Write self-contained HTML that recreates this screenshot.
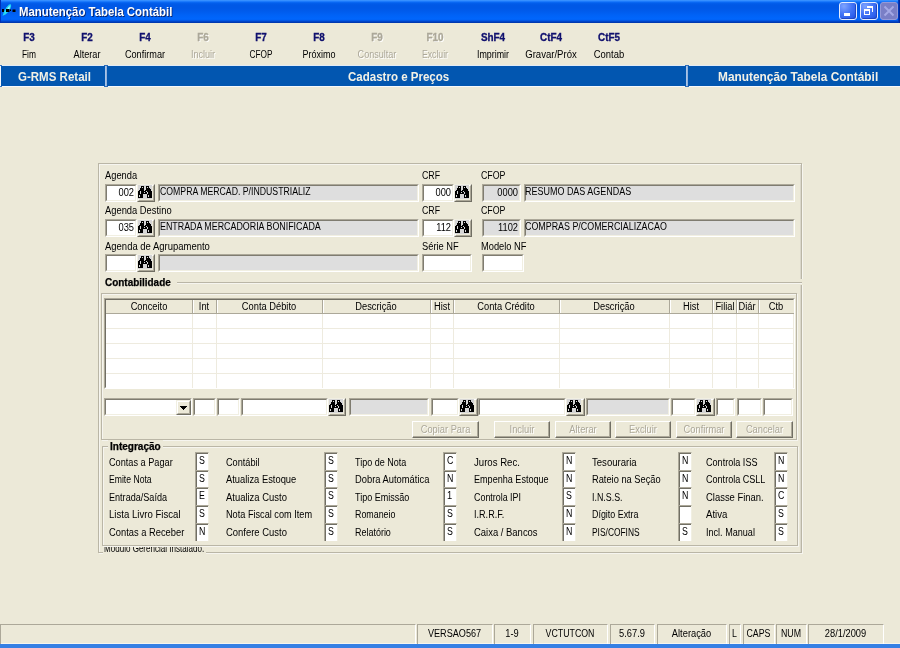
<!DOCTYPE html><html><head><meta charset="utf-8"><style>
html,body{margin:0;padding:0}
body{width:900px;height:648px;overflow:hidden;position:relative;background:#ECE9D8;font-family:"Liberation Sans",sans-serif}
#root{position:absolute;left:0;top:0;width:900px;height:648px;will-change:transform}
.t{position:absolute;white-space:nowrap;line-height:1;font-family:"Liberation Sans",sans-serif}
.sk{position:absolute;border-style:solid;border-width:1px;border-color:#ACA899 #FFFFFF #FFFFFF #ACA899}
.sk>div{border-style:solid;border-width:1px;border-color:#7F7C70 #F1EFE2 #F1EFE2 #7F7C70}
.rs{position:absolute;border-style:solid;border-width:1px;border-color:#F1EFE2 #716F64 #716F64 #F1EFE2;background:#ECE9D8}
.rs>div{border-style:solid;border-width:1px;border-color:#FFFFFF #ACA899 #ACA899 #FFFFFF}
.et{position:absolute;border:1px solid #BAB6A6;box-shadow:inset 1px 1px 0 #F6F5EF,1px 1px 0 #F6F5EF}
.hl{position:absolute;height:1px;background:#BAB6A6;box-shadow:0 1px 0 #F6F5EF}
</style></head><body><div id="root">

<div style="position:absolute;left:0;top:0;width:900px;height:23px;background:linear-gradient(to bottom,#4198FF 0px,#2A86FF 1px,#0E6EF8 2px,#035FEC 3px,#0058E6 5px,#0058E6 8px,#005BEC 11px,#0062F6 15px,#0066FC 19px,#0060F4 20px,#004CD6 21px,#003CB8 22px,#0034A8 23px)"></div>
<div style="position:absolute;left:0;top:0;width:1px;height:23px;background:#0030B8"></div>
<div style="position:absolute;left:898px;top:0;width:2px;height:23px;background:linear-gradient(to right,#0040C8,#001E90)"></div>
<svg style="position:absolute;left:0;top:0" width="18" height="20" viewBox="0 0 18 20"><path d="M2.6 15.8 L4 11.5 L6.5 7.2 L9 4.6 L10.8 4.3 L11.2 6 L10.2 9 L8.2 12 L5.5 14.6 Z" fill="#1FD8F2"/><path d="M5 13 L7.5 8.5 L9.8 5.4 L9.6 8.4 Z" fill="#A6F8FF"/><rect x="2" y="9" width="2" height="3" fill="#000"/><rect x="6" y="9" width="3.5" height="3" fill="#000"/><rect x="10" y="9.5" width="1" height="1.5" fill="#000"/><rect x="12.5" y="9.5" width="3" height="2.5" fill="#000"/></svg>
<div class="t" style="left:19.00px;top:5.00px;transform-origin:0 0;font-size:13px;font-weight:bold;color:#FFFFFF;transform:scaleX(0.9900);transform:scaleX(0.875);transform-origin:0 0;text-shadow:1px 1px 0 #0A246A;">Manutenção Tabela Contábil</div>
<div style="position:absolute;left:839px;top:2px;width:16px;height:16px;border:1px solid #E4ECFF;border-radius:3px;background:radial-gradient(circle at 25% 20%,#7FA4FF 0%,#4475F6 45%,#2A5CEA 80%,#1C4AD4 100%);box-shadow:inset -1px -1px 0 #2046C4"><div style="position:absolute;left:4px;top:10px;width:6px;height:3px;background:#fff"></div></div>
<div style="position:absolute;left:860px;top:2px;width:16px;height:16px;border:1px solid #E4ECFF;border-radius:3px;background:radial-gradient(circle at 25% 20%,#7FA4FF 0%,#4475F6 45%,#2A5CEA 80%,#1C4AD4 100%);box-shadow:inset -1px -1px 0 #2046C4"><div style="position:absolute;left:6px;top:3px;width:6px;height:2px;background:#fff"></div><div style="position:absolute;left:11px;top:3px;width:1px;height:6px;background:#fff"></div><div style="position:absolute;left:3px;top:6px;width:4px;height:3px;border:1px solid #fff;border-top-width:2px"></div></div>
<div style="position:absolute;left:880px;top:2px;width:16px;height:16px;border:1px solid #959AD8;border-radius:3px;background:#7A7FC6"><svg width="16" height="16" style="position:absolute;left:0;top:0"><path d="M3.5 3.5 L12.5 12.5 M12.5 3.5 L3.5 12.5" stroke="#A4A9E6" stroke-width="1.9"/></svg></div>
<div class="t" style="left:-0.22px;width:58px;text-align:center;top:33.44px;transform-origin:50% 0;font-size:10px;font-weight:bold;color:#10106E;transform:scaleX(0.9900);-webkit-text-stroke:0.3px #10106E;">F3</div>
<div class="t" style="left:-5.86px;width:70px;text-align:center;top:50.14px;transform-origin:50% 0;font-size:10px;font-weight:normal;color:#000;transform:scaleX(0.8389);">Fim</div>
<div class="t" style="left:57.78px;width:58px;text-align:center;top:33.44px;transform-origin:50% 0;font-size:10px;font-weight:bold;color:#10106E;transform:scaleX(0.9900);-webkit-text-stroke:0.3px #10106E;">F2</div>
<div class="t" style="left:51.69px;width:70px;text-align:center;top:50.14px;transform-origin:50% 0;font-size:10px;font-weight:normal;color:#000;transform:scaleX(0.9129);">Alterar</div>
<div class="t" style="left:115.78px;width:58px;text-align:center;top:33.44px;transform-origin:50% 0;font-size:10px;font-weight:bold;color:#10106E;transform:scaleX(0.9900);-webkit-text-stroke:0.3px #10106E;">F4</div>
<div class="t" style="left:109.69px;width:70px;text-align:center;top:50.14px;transform-origin:50% 0;font-size:10px;font-weight:normal;color:#000;transform:scaleX(0.9155);">Confirmar</div>
<div class="t" style="left:173.78px;width:58px;text-align:center;top:33.44px;transform-origin:50% 0;font-size:10px;font-weight:bold;color:#ACA899;transform:scaleX(0.9900);-webkit-text-stroke:0.3px #ACA899;text-shadow:1px 1px 0 #fff;">F6</div>
<div class="t" style="left:167.70px;width:70px;text-align:center;top:50.14px;transform-origin:50% 0;font-size:10px;font-weight:normal;color:#ACA899;transform:scaleX(0.9069);text-shadow:1px 1px 0 #fff;">Incluir</div>
<div class="t" style="left:231.78px;width:58px;text-align:center;top:33.44px;transform-origin:50% 0;font-size:10px;font-weight:bold;color:#10106E;transform:scaleX(0.9900);-webkit-text-stroke:0.3px #10106E;">F7</div>
<div class="t" style="left:225.86px;width:70px;text-align:center;top:50.14px;transform-origin:50% 0;font-size:10px;font-weight:normal;color:#000;transform:scaleX(0.8254);">CFOP</div>
<div class="t" style="left:289.78px;width:58px;text-align:center;top:33.44px;transform-origin:50% 0;font-size:10px;font-weight:bold;color:#10106E;transform:scaleX(0.9900);-webkit-text-stroke:0.3px #10106E;">F8</div>
<div class="t" style="left:283.80px;width:70px;text-align:center;top:50.14px;transform-origin:50% 0;font-size:10px;font-weight:normal;color:#000;transform:scaleX(0.8999);">Próximo</div>
<div class="t" style="left:347.78px;width:58px;text-align:center;top:33.44px;transform-origin:50% 0;font-size:10px;font-weight:bold;color:#ACA899;transform:scaleX(0.9900);-webkit-text-stroke:0.3px #ACA899;text-shadow:1px 1px 0 #fff;">F9</div>
<div class="t" style="left:341.70px;width:70px;text-align:center;top:50.14px;transform-origin:50% 0;font-size:10px;font-weight:normal;color:#ACA899;transform:scaleX(0.9064);text-shadow:1px 1px 0 #fff;">Consultar</div>
<div class="t" style="left:405.78px;width:58px;text-align:center;top:33.44px;transform-origin:50% 0;font-size:10px;font-weight:bold;color:#ACA899;transform:scaleX(0.9900);-webkit-text-stroke:0.3px #ACA899;text-shadow:1px 1px 0 #fff;">F10</div>
<div class="t" style="left:399.71px;width:70px;text-align:center;top:50.14px;transform-origin:50% 0;font-size:10px;font-weight:normal;color:#ACA899;transform:scaleX(0.8672);text-shadow:1px 1px 0 #fff;">Excluir</div>
<div class="t" style="left:463.78px;width:58px;text-align:center;top:33.44px;transform-origin:50% 0;font-size:10px;font-weight:bold;color:#10106E;transform:scaleX(0.9900);-webkit-text-stroke:0.3px #10106E;">ShF4</div>
<div class="t" style="left:457.70px;width:70px;text-align:center;top:50.14px;transform-origin:50% 0;font-size:10px;font-weight:normal;color:#000;transform:scaleX(0.8865);">Imprimir</div>
<div class="t" style="left:521.78px;width:58px;text-align:center;top:33.44px;transform-origin:50% 0;font-size:10px;font-weight:bold;color:#10106E;transform:scaleX(0.9900);-webkit-text-stroke:0.3px #10106E;">CtF4</div>
<div class="t" style="left:516.00px;width:70px;text-align:center;top:50.14px;transform-origin:50% 0;font-size:10px;font-weight:normal;color:#000;transform:scaleX(0.9573);">Gravar/Próx</div>
<div class="t" style="left:579.78px;width:58px;text-align:center;top:33.44px;transform-origin:50% 0;font-size:10px;font-weight:bold;color:#10106E;transform:scaleX(0.9900);-webkit-text-stroke:0.3px #10106E;">CtF5</div>
<div class="t" style="left:573.79px;width:70px;text-align:center;top:50.14px;transform-origin:50% 0;font-size:10px;font-weight:normal;color:#000;transform:scaleX(0.9423);">Contab</div>
<div style="position:absolute;left:0;top:65px;width:900px;height:22px;background:#0256B0;border-top:1px solid #E2EBF5;border-bottom:1px solid #F6F8FB;box-sizing:border-box"></div>
<div style="position:absolute;left:0;top:66px;width:1px;height:20px;background:#F4F7FB"></div>
<div style="position:absolute;left:0;top:65px;width:2px;height:1px;background:#3D78C0"></div><div style="position:absolute;left:0;top:86px;width:2px;height:1px;background:#3D78C0"></div>
<div style="position:absolute;left:105px;top:66px;width:2px;height:20px;background:linear-gradient(to right,#B4CCEA,#86AADA)"></div>
<div style="position:absolute;left:104px;top:65px;width:4px;height:1px;background:#2F6DBA"></div>
<div style="position:absolute;left:104px;top:86px;width:4px;height:1px;background:#2F6DBA"></div>
<div style="position:absolute;left:686px;top:66px;width:2px;height:20px;background:linear-gradient(to right,#B4CCEA,#86AADA)"></div>
<div style="position:absolute;left:685px;top:65px;width:4px;height:1px;background:#2F6DBA"></div>
<div style="position:absolute;left:685px;top:86px;width:4px;height:1px;background:#2F6DBA"></div>
<div class="t" style="left:18.30px;top:70.54px;transform-origin:0 0;font-size:12px;font-weight:bold;color:#F3F1E6;transform:scaleX(0.9900);transform:scaleX(0.96);transform-origin:0 0;">G-RMS Retail</div>
<div class="t" style="left:348.30px;top:70.54px;transform-origin:0 0;font-size:12px;font-weight:bold;color:#F3F1E6;transform:scaleX(0.9900);transform:scaleX(0.96);transform-origin:0 0;">Cadastro e Preços</div>
<div class="t" style="left:718.30px;top:70.54px;transform-origin:0 0;font-size:12px;font-weight:bold;color:#F3F1E6;transform:scaleX(0.9900);transform:scaleX(0.99);transform-origin:0 0;">Manutenção Tabela Contábil</div>
<div class="et" style="left:98px;top:163px;width:702px;height:388px"></div>
<div style="position:absolute;left:800px;top:165px;width:1px;height:387px;background:#DAD7CA"></div>
<div class="t" style="left:105.00px;top:170.53px;transform-origin:0 0;font-size:10px;font-weight:normal;color:#000;transform:scaleX(0.9300);">Agenda</div>
<div class="t" style="left:421.70px;top:170.53px;transform-origin:0 0;font-size:10px;font-weight:normal;color:#000;transform:scaleX(0.8800);">CRF</div>
<div class="t" style="left:481.10px;top:170.53px;transform-origin:0 0;font-size:10px;font-weight:normal;color:#000;transform:scaleX(0.8800);">CFOP</div>
<div class="t" style="left:105.00px;top:205.53px;transform-origin:0 0;font-size:10px;font-weight:normal;color:#000;transform:scaleX(0.9357);">Agenda Destino</div>
<div class="t" style="left:421.70px;top:205.53px;transform-origin:0 0;font-size:10px;font-weight:normal;color:#000;transform:scaleX(0.8800);">CRF</div>
<div class="t" style="left:481.10px;top:205.53px;transform-origin:0 0;font-size:10px;font-weight:normal;color:#000;transform:scaleX(0.8800);">CFOP</div>
<div class="t" style="left:105.00px;top:241.53px;transform-origin:0 0;font-size:10px;font-weight:normal;color:#000;transform:scaleX(0.9477);">Agenda de Agrupamento</div>
<div class="t" style="left:421.70px;top:241.53px;transform-origin:0 0;font-size:10px;font-weight:normal;color:#000;transform:scaleX(0.9300);">Série NF</div>
<div class="t" style="left:481.10px;top:241.53px;transform-origin:0 0;font-size:10px;font-weight:normal;color:#000;transform:scaleX(0.9300);">Modelo NF</div>
<div class="sk" style="left:105px;top:184px;width:30px;height:16px"><div style="width:28px;height:14px;background:#fff"></div></div>
<div class="rs" style="left:137px;top:184px;width:16px;height:16px"><div style="width:14px;height:14px;position:relative"><svg width="14" height="14" viewBox="0 0 14 14" shape-rendering="crispEdges" style="position:absolute;left:-1px;top:-1px"><rect width="14" height="14" fill="#D6D6D6"/><path fill="#000" d="M3 1h3v1h-3zM8 1h3v1h-3zM3 2h1v1h-1zM5 2h1v1h-1zM8 2h1v1h-1zM10 2h1v1h-1zM2 3h4v1h-4zM8 3h4v1h-4zM2 4h4v1h-4zM8 4h5v1h-5zM1 5h5v1h-5zM7 5h6v1h-6zM0 6h2v1h-2zM3 6h5v1h-5zM9 6h5v1h-5zM0 7h2v1h-2zM3 7h3v1h-3zM7 7h2v1h-2zM10 7h4v1h-4zM0 8h2v1h-2zM3 8h6v1h-6zM10 8h4v1h-4zM0 9h5v1h-5zM9 9h5v1h-5zM0 10h1v1h-1zM2 10h3v1h-3zM9 10h1v1h-1zM11 10h3v1h-3zM0 11h1v1h-1zM2 11h3v1h-3zM9 11h1v1h-1zM11 11h3v1h-3zM0 12h5v1h-5zM9 12h5v1h-5z"/></svg></div></div>
<div class="sk" style="left:158px;top:184px;width:259px;height:16px"><div style="width:257px;height:14px;background:#DEDEDE"></div></div>
<div class="sk" style="left:422px;top:184px;width:30px;height:16px"><div style="width:28px;height:14px;background:#fff"></div></div>
<div class="rs" style="left:454px;top:184px;width:16px;height:16px"><div style="width:14px;height:14px;position:relative"><svg width="14" height="14" viewBox="0 0 14 14" shape-rendering="crispEdges" style="position:absolute;left:-1px;top:-1px"><rect width="14" height="14" fill="#D6D6D6"/><path fill="#000" d="M3 1h3v1h-3zM8 1h3v1h-3zM3 2h1v1h-1zM5 2h1v1h-1zM8 2h1v1h-1zM10 2h1v1h-1zM2 3h4v1h-4zM8 3h4v1h-4zM2 4h4v1h-4zM8 4h5v1h-5zM1 5h5v1h-5zM7 5h6v1h-6zM0 6h2v1h-2zM3 6h5v1h-5zM9 6h5v1h-5zM0 7h2v1h-2zM3 7h3v1h-3zM7 7h2v1h-2zM10 7h4v1h-4zM0 8h2v1h-2zM3 8h6v1h-6zM10 8h4v1h-4zM0 9h5v1h-5zM9 9h5v1h-5zM0 10h1v1h-1zM2 10h3v1h-3zM9 10h1v1h-1zM11 10h3v1h-3zM0 11h1v1h-1zM2 11h3v1h-3zM9 11h1v1h-1zM11 11h3v1h-3zM0 12h5v1h-5zM9 12h5v1h-5z"/></svg></div></div>
<div class="sk" style="left:482px;top:184px;width:37px;height:16px"><div style="width:35px;height:14px;background:#DEDEDE"></div></div>
<div class="sk" style="left:524px;top:184px;width:269px;height:16px"><div style="width:267px;height:14px;background:#DEDEDE"></div></div>
<div class="t" style="left:-166.41px;width:300px;text-align:right;top:187.53px;transform-origin:100% 0;font-size:10px;font-weight:normal;color:#000;transform:scaleX(0.9300);">002</div>
<div class="t" style="left:159.60px;top:186.94px;transform-origin:0 0;font-size:10px;font-weight:normal;color:#000;transform:scaleX(0.8716);">COMPRA MERCAD. P/INDUSTRIALIZ</div>
<div class="t" style="left:150.59px;width:300px;text-align:right;top:187.53px;transform-origin:100% 0;font-size:10px;font-weight:normal;color:#000;transform:scaleX(0.9300);">000</div>
<div class="t" style="left:217.59px;width:300px;text-align:right;top:187.53px;transform-origin:100% 0;font-size:10px;font-weight:normal;color:#000;transform:scaleX(0.9300);">0000</div>
<div class="t" style="left:525.30px;top:186.94px;transform-origin:0 0;font-size:10px;font-weight:normal;color:#000;transform:scaleX(0.8973);">RESUMO DAS AGENDAS</div>
<div class="sk" style="left:105px;top:219px;width:30px;height:16px"><div style="width:28px;height:14px;background:#fff"></div></div>
<div class="rs" style="left:137px;top:219px;width:16px;height:16px"><div style="width:14px;height:14px;position:relative"><svg width="14" height="14" viewBox="0 0 14 14" shape-rendering="crispEdges" style="position:absolute;left:-1px;top:-1px"><rect width="14" height="14" fill="#D6D6D6"/><path fill="#000" d="M3 1h3v1h-3zM8 1h3v1h-3zM3 2h1v1h-1zM5 2h1v1h-1zM8 2h1v1h-1zM10 2h1v1h-1zM2 3h4v1h-4zM8 3h4v1h-4zM2 4h4v1h-4zM8 4h5v1h-5zM1 5h5v1h-5zM7 5h6v1h-6zM0 6h2v1h-2zM3 6h5v1h-5zM9 6h5v1h-5zM0 7h2v1h-2zM3 7h3v1h-3zM7 7h2v1h-2zM10 7h4v1h-4zM0 8h2v1h-2zM3 8h6v1h-6zM10 8h4v1h-4zM0 9h5v1h-5zM9 9h5v1h-5zM0 10h1v1h-1zM2 10h3v1h-3zM9 10h1v1h-1zM11 10h3v1h-3zM0 11h1v1h-1zM2 11h3v1h-3zM9 11h1v1h-1zM11 11h3v1h-3zM0 12h5v1h-5zM9 12h5v1h-5z"/></svg></div></div>
<div class="sk" style="left:158px;top:219px;width:259px;height:16px"><div style="width:257px;height:14px;background:#DEDEDE"></div></div>
<div class="sk" style="left:422px;top:219px;width:30px;height:16px"><div style="width:28px;height:14px;background:#fff"></div></div>
<div class="rs" style="left:454px;top:219px;width:16px;height:16px"><div style="width:14px;height:14px;position:relative"><svg width="14" height="14" viewBox="0 0 14 14" shape-rendering="crispEdges" style="position:absolute;left:-1px;top:-1px"><rect width="14" height="14" fill="#D6D6D6"/><path fill="#000" d="M3 1h3v1h-3zM8 1h3v1h-3zM3 2h1v1h-1zM5 2h1v1h-1zM8 2h1v1h-1zM10 2h1v1h-1zM2 3h4v1h-4zM8 3h4v1h-4zM2 4h4v1h-4zM8 4h5v1h-5zM1 5h5v1h-5zM7 5h6v1h-6zM0 6h2v1h-2zM3 6h5v1h-5zM9 6h5v1h-5zM0 7h2v1h-2zM3 7h3v1h-3zM7 7h2v1h-2zM10 7h4v1h-4zM0 8h2v1h-2zM3 8h6v1h-6zM10 8h4v1h-4zM0 9h5v1h-5zM9 9h5v1h-5zM0 10h1v1h-1zM2 10h3v1h-3zM9 10h1v1h-1zM11 10h3v1h-3zM0 11h1v1h-1zM2 11h3v1h-3zM9 11h1v1h-1zM11 11h3v1h-3zM0 12h5v1h-5zM9 12h5v1h-5z"/></svg></div></div>
<div class="sk" style="left:482px;top:219px;width:37px;height:16px"><div style="width:35px;height:14px;background:#DEDEDE"></div></div>
<div class="sk" style="left:524px;top:219px;width:269px;height:16px"><div style="width:267px;height:14px;background:#DEDEDE"></div></div>
<div class="t" style="left:-166.41px;width:300px;text-align:right;top:222.53px;transform-origin:100% 0;font-size:10px;font-weight:normal;color:#000;transform:scaleX(0.9300);">035</div>
<div class="t" style="left:159.60px;top:221.94px;transform-origin:0 0;font-size:10px;font-weight:normal;color:#000;transform:scaleX(0.8873);">ENTRADA MERCADORIA BONIFICADA</div>
<div class="t" style="left:150.59px;width:300px;text-align:right;top:222.53px;transform-origin:100% 0;font-size:10px;font-weight:normal;color:#000;transform:scaleX(0.9300);">112</div>
<div class="t" style="left:217.59px;width:300px;text-align:right;top:222.53px;transform-origin:100% 0;font-size:10px;font-weight:normal;color:#000;transform:scaleX(0.9300);">1102</div>
<div class="t" style="left:525.30px;top:221.94px;transform-origin:0 0;font-size:10px;font-weight:normal;color:#000;transform:scaleX(0.8892);">COMPRAS P/COMERCIALIZACAO</div>
<div class="sk" style="left:105px;top:254px;width:30px;height:16px"><div style="width:28px;height:14px;background:#fff"></div></div>
<div class="rs" style="left:137px;top:254px;width:16px;height:16px"><div style="width:14px;height:14px;position:relative"><svg width="14" height="14" viewBox="0 0 14 14" shape-rendering="crispEdges" style="position:absolute;left:-1px;top:-1px"><rect width="14" height="14" fill="#D6D6D6"/><path fill="#000" d="M3 1h3v1h-3zM8 1h3v1h-3zM3 2h1v1h-1zM5 2h1v1h-1zM8 2h1v1h-1zM10 2h1v1h-1zM2 3h4v1h-4zM8 3h4v1h-4zM2 4h4v1h-4zM8 4h5v1h-5zM1 5h5v1h-5zM7 5h6v1h-6zM0 6h2v1h-2zM3 6h5v1h-5zM9 6h5v1h-5zM0 7h2v1h-2zM3 7h3v1h-3zM7 7h2v1h-2zM10 7h4v1h-4zM0 8h2v1h-2zM3 8h6v1h-6zM10 8h4v1h-4zM0 9h5v1h-5zM9 9h5v1h-5zM0 10h1v1h-1zM2 10h3v1h-3zM9 10h1v1h-1zM11 10h3v1h-3zM0 11h1v1h-1zM2 11h3v1h-3zM9 11h1v1h-1zM11 11h3v1h-3zM0 12h5v1h-5zM9 12h5v1h-5z"/></svg></div></div>
<div class="sk" style="left:158px;top:254px;width:259px;height:16px"><div style="width:257px;height:14px;background:#DEDEDE"></div></div>
<div class="sk" style="left:422px;top:254px;width:48px;height:16px"><div style="width:46px;height:14px;background:#fff"></div></div>
<div class="sk" style="left:482px;top:254px;width:40px;height:16px"><div style="width:38px;height:14px;background:#fff"></div></div>
<div class="t" style="left:105.40px;top:277.54px;transform-origin:0 0;font-size:10px;font-weight:bold;color:#000;transform:scaleX(0.9947);-webkit-text-stroke:0.25px #000;">Contabilidade</div>
<div style="position:absolute;left:797px;top:279px;width:6px;height:6px;background:#ECE9D8"></div>
<div class="hl" style="left:177px;top:282px;width:625px"></div>
<div class="et" style="left:101px;top:293px;width:694px;height:145px"></div>
<div style="position:absolute;left:104px;top:298px;width:691px;height:91px;box-sizing:border-box;border-style:solid;border-width:1px;border-color:#ACA899 #FFFFFF #FFFFFF #ACA899"></div>
<div style="position:absolute;left:105px;top:299px;width:689px;height:89px;box-sizing:border-box;border-style:solid;border-width:1px;border-color:#716F64 #F1EFE2 #F1EFE2 #716F64"></div>
<div style="position:absolute;left:106px;top:300px;width:688px;height:88px;background:#fff;overflow:hidden">
<div style="position:absolute;left:0;top:0;width:688px;height:14px;background:#ECE9D8;border-bottom:1px solid #ACA899;box-sizing:border-box"></div>
<div style="position:absolute;left:86px;top:0;width:1px;height:13px;background:#ACA899"></div>
<div style="position:absolute;left:87px;top:0;width:1px;height:13px;background:#FFFFFF"></div>
<div style="position:absolute;left:86px;top:14px;width:1px;height:74px;background:#EEEBDF"></div>
<div style="position:absolute;left:110px;top:0;width:1px;height:13px;background:#ACA899"></div>
<div style="position:absolute;left:111px;top:0;width:1px;height:13px;background:#FFFFFF"></div>
<div style="position:absolute;left:110px;top:14px;width:1px;height:74px;background:#EEEBDF"></div>
<div style="position:absolute;left:216px;top:0;width:1px;height:13px;background:#ACA899"></div>
<div style="position:absolute;left:217px;top:0;width:1px;height:13px;background:#FFFFFF"></div>
<div style="position:absolute;left:216px;top:14px;width:1px;height:74px;background:#EEEBDF"></div>
<div style="position:absolute;left:324px;top:0;width:1px;height:13px;background:#ACA899"></div>
<div style="position:absolute;left:325px;top:0;width:1px;height:13px;background:#FFFFFF"></div>
<div style="position:absolute;left:324px;top:14px;width:1px;height:74px;background:#EEEBDF"></div>
<div style="position:absolute;left:347px;top:0;width:1px;height:13px;background:#ACA899"></div>
<div style="position:absolute;left:348px;top:0;width:1px;height:13px;background:#FFFFFF"></div>
<div style="position:absolute;left:347px;top:14px;width:1px;height:74px;background:#EEEBDF"></div>
<div style="position:absolute;left:453px;top:0;width:1px;height:13px;background:#ACA899"></div>
<div style="position:absolute;left:454px;top:0;width:1px;height:13px;background:#FFFFFF"></div>
<div style="position:absolute;left:453px;top:14px;width:1px;height:74px;background:#EEEBDF"></div>
<div style="position:absolute;left:563px;top:0;width:1px;height:13px;background:#ACA899"></div>
<div style="position:absolute;left:564px;top:0;width:1px;height:13px;background:#FFFFFF"></div>
<div style="position:absolute;left:563px;top:14px;width:1px;height:74px;background:#EEEBDF"></div>
<div style="position:absolute;left:606px;top:0;width:1px;height:13px;background:#ACA899"></div>
<div style="position:absolute;left:607px;top:0;width:1px;height:13px;background:#FFFFFF"></div>
<div style="position:absolute;left:606px;top:14px;width:1px;height:74px;background:#EEEBDF"></div>
<div style="position:absolute;left:630px;top:0;width:1px;height:13px;background:#ACA899"></div>
<div style="position:absolute;left:631px;top:0;width:1px;height:13px;background:#FFFFFF"></div>
<div style="position:absolute;left:630px;top:14px;width:1px;height:74px;background:#EEEBDF"></div>
<div style="position:absolute;left:652px;top:0;width:1px;height:13px;background:#ACA899"></div>
<div style="position:absolute;left:653px;top:0;width:1px;height:13px;background:#FFFFFF"></div>
<div style="position:absolute;left:652px;top:14px;width:1px;height:74px;background:#EEEBDF"></div>
<div style="position:absolute;left:687px;top:14px;width:1px;height:74px;background:#EEEBDF"></div>
<div style="position:absolute;left:0;top:28px;width:688px;height:1px;background:#EEEBDF"></div>
<div style="position:absolute;left:0;top:43px;width:688px;height:1px;background:#EEEBDF"></div>
<div style="position:absolute;left:0;top:58px;width:688px;height:1px;background:#EEEBDF"></div>
<div style="position:absolute;left:0;top:73px;width:688px;height:1px;background:#EEEBDF"></div>
</div>
<div class="t" style="left:88.80px;width:120px;text-align:center;top:301.84px;transform-origin:50% 0;font-size:10px;font-weight:normal;color:#000;transform:scaleX(0.9300);">Conceito</div>
<div class="t" style="left:144.40px;width:120px;text-align:center;top:301.84px;transform-origin:50% 0;font-size:10px;font-weight:normal;color:#000;transform:scaleX(0.9300);">Int</div>
<div class="t" style="left:209.30px;width:120px;text-align:center;top:301.84px;transform-origin:50% 0;font-size:10px;font-weight:normal;color:#000;transform:scaleX(0.9300);">Conta Débito</div>
<div class="t" style="left:316.30px;width:120px;text-align:center;top:301.84px;transform-origin:50% 0;font-size:10px;font-weight:normal;color:#000;transform:scaleX(0.9300);">Descrição</div>
<div class="t" style="left:381.90px;width:120px;text-align:center;top:301.84px;transform-origin:50% 0;font-size:10px;font-weight:normal;color:#000;transform:scaleX(0.9300);">Hist</div>
<div class="t" style="left:446.30px;width:120px;text-align:center;top:301.84px;transform-origin:50% 0;font-size:10px;font-weight:normal;color:#000;transform:scaleX(0.9300);">Conta Crédito</div>
<div class="t" style="left:554.30px;width:120px;text-align:center;top:301.84px;transform-origin:50% 0;font-size:10px;font-weight:normal;color:#000;transform:scaleX(0.9300);">Descrição</div>
<div class="t" style="left:630.90px;width:120px;text-align:center;top:301.84px;transform-origin:50% 0;font-size:10px;font-weight:normal;color:#000;transform:scaleX(0.9300);">Hist</div>
<div class="t" style="left:664.60px;width:120px;text-align:center;top:301.84px;transform-origin:50% 0;font-size:10px;font-weight:normal;color:#000;transform:scaleX(0.9300);">Filial</div>
<div class="t" style="left:687.19px;width:120px;text-align:center;top:301.84px;transform-origin:50% 0;font-size:10px;font-weight:normal;color:#000;transform:scaleX(0.9300);">Diár</div>
<div class="t" style="left:715.80px;width:120px;text-align:center;top:301.84px;transform-origin:50% 0;font-size:10px;font-weight:normal;color:#000;transform:scaleX(0.9300);">Ctb</div>
<div class="sk" style="left:104px;top:398px;width:86px;height:16px"><div style="width:84px;height:14px;background:#fff"></div></div>
<div class="rs" style="left:176px;top:400px;width:13px;height:13px"><div style="width:11px;height:11px;position:relative"><svg width="11" height="10" style="position:absolute;left:0;top:0" shape-rendering="crispEdges"><path d="M2 4h7v1h-7zM3 5h5v1h-5zM4 6h3v1h-3zM5 7h1v1h-1z" fill="#000"/></svg></div></div>
<div class="sk" style="left:193px;top:398px;width:21px;height:16px"><div style="width:19px;height:14px;background:#fff"></div></div>
<div class="sk" style="left:217px;top:398px;width:21px;height:16px"><div style="width:19px;height:14px;background:#fff"></div></div>
<div class="sk" style="left:241px;top:398px;width:85px;height:16px"><div style="width:83px;height:14px;background:#fff"></div></div>
<div class="rs" style="left:328px;top:398px;width:16px;height:16px"><div style="width:14px;height:14px;position:relative"><svg width="14" height="14" viewBox="0 0 14 14" shape-rendering="crispEdges" style="position:absolute;left:-1px;top:-1px"><rect width="14" height="14" fill="#D6D6D6"/><path fill="#000" d="M3 1h3v1h-3zM8 1h3v1h-3zM3 2h1v1h-1zM5 2h1v1h-1zM8 2h1v1h-1zM10 2h1v1h-1zM2 3h4v1h-4zM8 3h4v1h-4zM2 4h4v1h-4zM8 4h5v1h-5zM1 5h5v1h-5zM7 5h6v1h-6zM0 6h2v1h-2zM3 6h5v1h-5zM9 6h5v1h-5zM0 7h2v1h-2zM3 7h3v1h-3zM7 7h2v1h-2zM10 7h4v1h-4zM0 8h2v1h-2zM3 8h6v1h-6zM10 8h4v1h-4zM0 9h5v1h-5zM9 9h5v1h-5zM0 10h1v1h-1zM2 10h3v1h-3zM9 10h1v1h-1zM11 10h3v1h-3zM0 11h1v1h-1zM2 11h3v1h-3zM9 11h1v1h-1zM11 11h3v1h-3zM0 12h5v1h-5zM9 12h5v1h-5z"/></svg></div></div>
<div class="sk" style="left:349px;top:398px;width:78px;height:16px"><div style="width:76px;height:14px;background:#DEDEDE"></div></div>
<div class="sk" style="left:431px;top:398px;width:26px;height:16px"><div style="width:24px;height:14px;background:#fff"></div></div>
<div class="rs" style="left:459px;top:398px;width:17px;height:16px"><div style="width:15px;height:14px;position:relative"><svg width="14" height="14" viewBox="0 0 14 14" shape-rendering="crispEdges" style="position:absolute;left:-1px;top:-1px"><rect width="14" height="14" fill="#D6D6D6"/><path fill="#000" d="M3 1h3v1h-3zM8 1h3v1h-3zM3 2h1v1h-1zM5 2h1v1h-1zM8 2h1v1h-1zM10 2h1v1h-1zM2 3h4v1h-4zM8 3h4v1h-4zM2 4h4v1h-4zM8 4h5v1h-5zM1 5h5v1h-5zM7 5h6v1h-6zM0 6h2v1h-2zM3 6h5v1h-5zM9 6h5v1h-5zM0 7h2v1h-2zM3 7h3v1h-3zM7 7h2v1h-2zM10 7h4v1h-4zM0 8h2v1h-2zM3 8h6v1h-6zM10 8h4v1h-4zM0 9h5v1h-5zM9 9h5v1h-5zM0 10h1v1h-1zM2 10h3v1h-3zM9 10h1v1h-1zM11 10h3v1h-3zM0 11h1v1h-1zM2 11h3v1h-3zM9 11h1v1h-1zM11 11h3v1h-3zM0 12h5v1h-5zM9 12h5v1h-5z"/></svg></div></div>
<div class="sk" style="left:478px;top:398px;width:86px;height:16px"><div style="width:84px;height:14px;background:#fff"></div></div>
<div class="rs" style="left:566px;top:398px;width:17px;height:16px"><div style="width:15px;height:14px;position:relative"><svg width="14" height="14" viewBox="0 0 14 14" shape-rendering="crispEdges" style="position:absolute;left:-1px;top:-1px"><rect width="14" height="14" fill="#D6D6D6"/><path fill="#000" d="M3 1h3v1h-3zM8 1h3v1h-3zM3 2h1v1h-1zM5 2h1v1h-1zM8 2h1v1h-1zM10 2h1v1h-1zM2 3h4v1h-4zM8 3h4v1h-4zM2 4h4v1h-4zM8 4h5v1h-5zM1 5h5v1h-5zM7 5h6v1h-6zM0 6h2v1h-2zM3 6h5v1h-5zM9 6h5v1h-5zM0 7h2v1h-2zM3 7h3v1h-3zM7 7h2v1h-2zM10 7h4v1h-4zM0 8h2v1h-2zM3 8h6v1h-6zM10 8h4v1h-4zM0 9h5v1h-5zM9 9h5v1h-5zM0 10h1v1h-1zM2 10h3v1h-3zM9 10h1v1h-1zM11 10h3v1h-3zM0 11h1v1h-1zM2 11h3v1h-3zM9 11h1v1h-1zM11 11h3v1h-3zM0 12h5v1h-5zM9 12h5v1h-5z"/></svg></div></div>
<div class="sk" style="left:586px;top:398px;width:82px;height:16px"><div style="width:80px;height:14px;background:#DEDEDE"></div></div>
<div class="sk" style="left:671px;top:398px;width:23px;height:16px"><div style="width:21px;height:14px;background:#fff"></div></div>
<div class="rs" style="left:696px;top:398px;width:17px;height:16px"><div style="width:15px;height:14px;position:relative"><svg width="14" height="14" viewBox="0 0 14 14" shape-rendering="crispEdges" style="position:absolute;left:-1px;top:-1px"><rect width="14" height="14" fill="#D6D6D6"/><path fill="#000" d="M3 1h3v1h-3zM8 1h3v1h-3zM3 2h1v1h-1zM5 2h1v1h-1zM8 2h1v1h-1zM10 2h1v1h-1zM2 3h4v1h-4zM8 3h4v1h-4zM2 4h4v1h-4zM8 4h5v1h-5zM1 5h5v1h-5zM7 5h6v1h-6zM0 6h2v1h-2zM3 6h5v1h-5zM9 6h5v1h-5zM0 7h2v1h-2zM3 7h3v1h-3zM7 7h2v1h-2zM10 7h4v1h-4zM0 8h2v1h-2zM3 8h6v1h-6zM10 8h4v1h-4zM0 9h5v1h-5zM9 9h5v1h-5zM0 10h1v1h-1zM2 10h3v1h-3zM9 10h1v1h-1zM11 10h3v1h-3zM0 11h1v1h-1zM2 11h3v1h-3zM9 11h1v1h-1zM11 11h3v1h-3zM0 12h5v1h-5zM9 12h5v1h-5z"/></svg></div></div>
<div class="sk" style="left:716px;top:398px;width:17px;height:16px"><div style="width:15px;height:14px;background:#fff"></div></div>
<div class="sk" style="left:737px;top:398px;width:23px;height:16px"><div style="width:21px;height:14px;background:#fff"></div></div>
<div class="sk" style="left:763px;top:398px;width:28px;height:16px"><div style="width:26px;height:14px;background:#fff"></div></div>
<div style="position:absolute;left:412px;top:421px;width:65px;height:15px;border-style:solid;border-width:1px;border-color:#FFFFFF #716F64 #716F64 #FFFFFF;background:#ECE9D8;box-shadow:inset -1px -1px 0 #ACA899"></div>
<div class="t" style="left:411.80px;width:67px;text-align:center;top:424.54px;transform-origin:50% 0;font-size:10px;font-weight:normal;color:#ACA899;transform:scaleX(0.9300);text-shadow:1px 1px 0 #fff;">Copiar Para</div>
<div style="position:absolute;left:494px;top:421px;width:54px;height:15px;border-style:solid;border-width:1px;border-color:#FFFFFF #716F64 #716F64 #FFFFFF;background:#ECE9D8;box-shadow:inset -1px -1px 0 #ACA899"></div>
<div class="t" style="left:493.69px;width:56px;text-align:center;top:424.54px;transform-origin:50% 0;font-size:10px;font-weight:normal;color:#ACA899;transform:scaleX(0.9300);text-shadow:1px 1px 0 #fff;">Incluir</div>
<div style="position:absolute;left:555px;top:421px;width:54px;height:15px;border-style:solid;border-width:1px;border-color:#FFFFFF #716F64 #716F64 #FFFFFF;background:#ECE9D8;box-shadow:inset -1px -1px 0 #ACA899"></div>
<div class="t" style="left:554.69px;width:56px;text-align:center;top:424.54px;transform-origin:50% 0;font-size:10px;font-weight:normal;color:#ACA899;transform:scaleX(0.9300);text-shadow:1px 1px 0 #fff;">Alterar</div>
<div style="position:absolute;left:615px;top:421px;width:54px;height:15px;border-style:solid;border-width:1px;border-color:#FFFFFF #716F64 #716F64 #FFFFFF;background:#ECE9D8;box-shadow:inset -1px -1px 0 #ACA899"></div>
<div class="t" style="left:614.69px;width:56px;text-align:center;top:424.54px;transform-origin:50% 0;font-size:10px;font-weight:normal;color:#ACA899;transform:scaleX(0.9300);text-shadow:1px 1px 0 #fff;">Excluir</div>
<div style="position:absolute;left:676px;top:421px;width:54px;height:15px;border-style:solid;border-width:1px;border-color:#FFFFFF #716F64 #716F64 #FFFFFF;background:#ECE9D8;box-shadow:inset -1px -1px 0 #ACA899"></div>
<div class="t" style="left:675.69px;width:56px;text-align:center;top:424.54px;transform-origin:50% 0;font-size:10px;font-weight:normal;color:#ACA899;transform:scaleX(0.9300);text-shadow:1px 1px 0 #fff;">Confirmar</div>
<div style="position:absolute;left:736px;top:421px;width:55px;height:15px;border-style:solid;border-width:1px;border-color:#FFFFFF #716F64 #716F64 #FFFFFF;background:#ECE9D8;box-shadow:inset -1px -1px 0 #ACA899"></div>
<div class="t" style="left:735.69px;width:57px;text-align:center;top:424.54px;transform-origin:50% 0;font-size:10px;font-weight:normal;color:#ACA899;transform:scaleX(0.9300);text-shadow:1px 1px 0 #fff;">Cancelar</div>
<div style="position:absolute;left:103px;top:546px;width:103px;height:8px;overflow:hidden;background:#ECE9D8">
<div class="t" style="left:1.30px;top:-2.26px;font-size:10px;transform:scaleX(0.8049);transform-origin:0 0">Módulo Gerencial Instalado.</div>
</div>
<div class="et" style="left:102px;top:446px;width:694px;height:98px"></div>
<div style="position:absolute;left:108px;top:440px;width:55px;height:12px;background:#ECE9D8"></div>
<div class="t" style="left:110.20px;top:441.84px;transform-origin:0 0;font-size:10px;font-weight:bold;color:#000;transform:scaleX(1.0027);-webkit-text-stroke:0.25px #000;">Integração</div>
<div class="t" style="left:108.70px;top:457.54px;transform-origin:0 0;font-size:10px;font-weight:normal;color:#000;transform:scaleX(0.9165);">Contas a Pagar</div>
<div style="position:absolute;left:195px;top:452px;width:14px;height:18px;box-sizing:border-box;background:#fff;border-style:solid;border-width:1px 1px 0 1px;border-color:#ACA899 #F1EFE2 #F1EFE2 #ACA899;box-shadow:inset 1px 1px 0 #716F64"></div>
<div class="t" style="left:199.00px;top:455.94px;transform-origin:0 0;font-size:10px;font-weight:normal;color:#000;transform:scaleX(0.8800);">S</div>
<div class="t" style="left:108.70px;top:475.04px;transform-origin:0 0;font-size:10px;font-weight:normal;color:#000;transform:scaleX(0.8617);">Emite Nota</div>
<div style="position:absolute;left:195px;top:470px;width:14px;height:18px;box-sizing:border-box;background:#fff;border-style:solid;border-width:1px 1px 0 1px;border-color:#ACA899 #F1EFE2 #F1EFE2 #ACA899;box-shadow:inset 1px 1px 0 #716F64"></div>
<div class="t" style="left:199.00px;top:473.94px;transform-origin:0 0;font-size:10px;font-weight:normal;color:#000;transform:scaleX(0.8800);">S</div>
<div class="t" style="left:108.70px;top:492.54px;transform-origin:0 0;font-size:10px;font-weight:normal;color:#000;transform:scaleX(0.9072);">Entrada/Saída</div>
<div style="position:absolute;left:195px;top:487px;width:14px;height:18px;box-sizing:border-box;background:#fff;border-style:solid;border-width:1px 1px 0 1px;border-color:#ACA899 #F1EFE2 #F1EFE2 #ACA899;box-shadow:inset 1px 1px 0 #716F64"></div>
<div class="t" style="left:199.00px;top:490.94px;transform-origin:0 0;font-size:10px;font-weight:normal;color:#000;transform:scaleX(0.8800);">E</div>
<div class="t" style="left:108.70px;top:510.04px;transform-origin:0 0;font-size:10px;font-weight:normal;color:#000;transform:scaleX(0.9603);">Lista Livro Fiscal</div>
<div style="position:absolute;left:195px;top:505px;width:14px;height:18px;box-sizing:border-box;background:#fff;border-style:solid;border-width:1px 1px 0 1px;border-color:#ACA899 #F1EFE2 #F1EFE2 #ACA899;box-shadow:inset 1px 1px 0 #716F64"></div>
<div class="t" style="left:199.00px;top:508.94px;transform-origin:0 0;font-size:10px;font-weight:normal;color:#000;transform:scaleX(0.8800);">S</div>
<div class="t" style="left:108.70px;top:527.53px;transform-origin:0 0;font-size:10px;font-weight:normal;color:#000;transform:scaleX(0.9339);">Contas a Receber</div>
<div style="position:absolute;left:195px;top:523px;width:14px;height:18px;box-sizing:border-box;background:#fff;border-style:solid;border-width:1px 1px 0 1px;border-color:#ACA899 #F1EFE2 #F1EFE2 #ACA899;box-shadow:inset 1px 1px 0 #716F64"></div>
<div class="t" style="left:199.00px;top:526.93px;transform-origin:0 0;font-size:10px;font-weight:normal;color:#000;transform:scaleX(0.8800);">N</div>
<div class="t" style="left:226.30px;top:457.54px;transform-origin:0 0;font-size:10px;font-weight:normal;color:#000;transform:scaleX(0.9159);">Contábil</div>
<div style="position:absolute;left:324px;top:452px;width:14px;height:18px;box-sizing:border-box;background:#fff;border-style:solid;border-width:1px 1px 0 1px;border-color:#ACA899 #F1EFE2 #F1EFE2 #ACA899;box-shadow:inset 1px 1px 0 #716F64"></div>
<div class="t" style="left:328.00px;top:455.94px;transform-origin:0 0;font-size:10px;font-weight:normal;color:#000;transform:scaleX(0.8800);">S</div>
<div class="t" style="left:226.30px;top:475.04px;transform-origin:0 0;font-size:10px;font-weight:normal;color:#000;transform:scaleX(0.9366);">Atualiza Estoque</div>
<div style="position:absolute;left:324px;top:470px;width:14px;height:18px;box-sizing:border-box;background:#fff;border-style:solid;border-width:1px 1px 0 1px;border-color:#ACA899 #F1EFE2 #F1EFE2 #ACA899;box-shadow:inset 1px 1px 0 #716F64"></div>
<div class="t" style="left:328.00px;top:473.94px;transform-origin:0 0;font-size:10px;font-weight:normal;color:#000;transform:scaleX(0.8800);">S</div>
<div class="t" style="left:226.30px;top:492.54px;transform-origin:0 0;font-size:10px;font-weight:normal;color:#000;transform:scaleX(0.9443);">Atualiza Custo</div>
<div style="position:absolute;left:324px;top:487px;width:14px;height:18px;box-sizing:border-box;background:#fff;border-style:solid;border-width:1px 1px 0 1px;border-color:#ACA899 #F1EFE2 #F1EFE2 #ACA899;box-shadow:inset 1px 1px 0 #716F64"></div>
<div class="t" style="left:328.00px;top:490.94px;transform-origin:0 0;font-size:10px;font-weight:normal;color:#000;transform:scaleX(0.8800);">S</div>
<div class="t" style="left:226.30px;top:510.04px;transform-origin:0 0;font-size:10px;font-weight:normal;color:#000;transform:scaleX(0.9158);">Nota Fiscal com Item</div>
<div style="position:absolute;left:324px;top:505px;width:14px;height:18px;box-sizing:border-box;background:#fff;border-style:solid;border-width:1px 1px 0 1px;border-color:#ACA899 #F1EFE2 #F1EFE2 #ACA899;box-shadow:inset 1px 1px 0 #716F64"></div>
<div class="t" style="left:328.00px;top:508.94px;transform-origin:0 0;font-size:10px;font-weight:normal;color:#000;transform:scaleX(0.8800);">S</div>
<div class="t" style="left:226.30px;top:527.53px;transform-origin:0 0;font-size:10px;font-weight:normal;color:#000;transform:scaleX(0.9443);">Confere Custo</div>
<div style="position:absolute;left:324px;top:523px;width:14px;height:18px;box-sizing:border-box;background:#fff;border-style:solid;border-width:1px 1px 0 1px;border-color:#ACA899 #F1EFE2 #F1EFE2 #ACA899;box-shadow:inset 1px 1px 0 #716F64"></div>
<div class="t" style="left:328.00px;top:526.93px;transform-origin:0 0;font-size:10px;font-weight:normal;color:#000;transform:scaleX(0.8800);">S</div>
<div class="t" style="left:355.30px;top:457.54px;transform-origin:0 0;font-size:10px;font-weight:normal;color:#000;transform:scaleX(0.9002);">Tipo de Nota</div>
<div style="position:absolute;left:443px;top:452px;width:14px;height:18px;box-sizing:border-box;background:#fff;border-style:solid;border-width:1px 1px 0 1px;border-color:#ACA899 #F1EFE2 #F1EFE2 #ACA899;box-shadow:inset 1px 1px 0 #716F64"></div>
<div class="t" style="left:447.00px;top:455.94px;transform-origin:0 0;font-size:10px;font-weight:normal;color:#000;transform:scaleX(0.8800);">C</div>
<div class="t" style="left:355.30px;top:475.04px;transform-origin:0 0;font-size:10px;font-weight:normal;color:#000;transform:scaleX(0.9357);">Dobra Automática</div>
<div style="position:absolute;left:443px;top:470px;width:14px;height:18px;box-sizing:border-box;background:#fff;border-style:solid;border-width:1px 1px 0 1px;border-color:#ACA899 #F1EFE2 #F1EFE2 #ACA899;box-shadow:inset 1px 1px 0 #716F64"></div>
<div class="t" style="left:447.00px;top:473.94px;transform-origin:0 0;font-size:10px;font-weight:normal;color:#000;transform:scaleX(0.8800);">N</div>
<div class="t" style="left:355.30px;top:492.54px;transform-origin:0 0;font-size:10px;font-weight:normal;color:#000;transform:scaleX(0.9020);">Tipo Emissão</div>
<div style="position:absolute;left:443px;top:487px;width:14px;height:18px;box-sizing:border-box;background:#fff;border-style:solid;border-width:1px 1px 0 1px;border-color:#ACA899 #F1EFE2 #F1EFE2 #ACA899;box-shadow:inset 1px 1px 0 #716F64"></div>
<div class="t" style="left:447.00px;top:490.94px;transform-origin:0 0;font-size:10px;font-weight:normal;color:#000;transform:scaleX(0.9300);">1</div>
<div class="t" style="left:355.30px;top:510.04px;transform-origin:0 0;font-size:10px;font-weight:normal;color:#000;transform:scaleX(0.8866);">Romaneio</div>
<div style="position:absolute;left:443px;top:505px;width:14px;height:18px;box-sizing:border-box;background:#fff;border-style:solid;border-width:1px 1px 0 1px;border-color:#ACA899 #F1EFE2 #F1EFE2 #ACA899;box-shadow:inset 1px 1px 0 #716F64"></div>
<div class="t" style="left:447.00px;top:508.94px;transform-origin:0 0;font-size:10px;font-weight:normal;color:#000;transform:scaleX(0.8800);">S</div>
<div class="t" style="left:355.30px;top:527.53px;transform-origin:0 0;font-size:10px;font-weight:normal;color:#000;transform:scaleX(0.8960);">Relatório</div>
<div style="position:absolute;left:443px;top:523px;width:14px;height:18px;box-sizing:border-box;background:#fff;border-style:solid;border-width:1px 1px 0 1px;border-color:#ACA899 #F1EFE2 #F1EFE2 #ACA899;box-shadow:inset 1px 1px 0 #716F64"></div>
<div class="t" style="left:447.00px;top:526.93px;transform-origin:0 0;font-size:10px;font-weight:normal;color:#000;transform:scaleX(0.8800);">S</div>
<div class="t" style="left:474.40px;top:457.54px;transform-origin:0 0;font-size:10px;font-weight:normal;color:#000;transform:scaleX(0.9614);">Juros Rec.</div>
<div style="position:absolute;left:562px;top:452px;width:14px;height:18px;box-sizing:border-box;background:#fff;border-style:solid;border-width:1px 1px 0 1px;border-color:#ACA899 #F1EFE2 #F1EFE2 #ACA899;box-shadow:inset 1px 1px 0 #716F64"></div>
<div class="t" style="left:566.00px;top:455.94px;transform-origin:0 0;font-size:10px;font-weight:normal;color:#000;transform:scaleX(0.8800);">N</div>
<div class="t" style="left:474.40px;top:475.04px;transform-origin:0 0;font-size:10px;font-weight:normal;color:#000;transform:scaleX(0.9067);">Empenha Estoque</div>
<div style="position:absolute;left:562px;top:470px;width:14px;height:18px;box-sizing:border-box;background:#fff;border-style:solid;border-width:1px 1px 0 1px;border-color:#ACA899 #F1EFE2 #F1EFE2 #ACA899;box-shadow:inset 1px 1px 0 #716F64"></div>
<div class="t" style="left:566.00px;top:473.94px;transform-origin:0 0;font-size:10px;font-weight:normal;color:#000;transform:scaleX(0.8800);">N</div>
<div class="t" style="left:474.40px;top:492.54px;transform-origin:0 0;font-size:10px;font-weight:normal;color:#000;transform:scaleX(0.8900);">Controla IPI</div>
<div style="position:absolute;left:562px;top:487px;width:14px;height:18px;box-sizing:border-box;background:#fff;border-style:solid;border-width:1px 1px 0 1px;border-color:#ACA899 #F1EFE2 #F1EFE2 #ACA899;box-shadow:inset 1px 1px 0 #716F64"></div>
<div class="t" style="left:566.00px;top:490.94px;transform-origin:0 0;font-size:10px;font-weight:normal;color:#000;transform:scaleX(0.8800);">S</div>
<div class="t" style="left:474.40px;top:510.04px;transform-origin:0 0;font-size:10px;font-weight:normal;color:#000;transform:scaleX(0.9092);">I.R.R.F.</div>
<div style="position:absolute;left:562px;top:505px;width:14px;height:18px;box-sizing:border-box;background:#fff;border-style:solid;border-width:1px 1px 0 1px;border-color:#ACA899 #F1EFE2 #F1EFE2 #ACA899;box-shadow:inset 1px 1px 0 #716F64"></div>
<div class="t" style="left:566.00px;top:508.94px;transform-origin:0 0;font-size:10px;font-weight:normal;color:#000;transform:scaleX(0.8800);">N</div>
<div class="t" style="left:474.40px;top:527.53px;transform-origin:0 0;font-size:10px;font-weight:normal;color:#000;transform:scaleX(0.9456);">Caixa / Bancos</div>
<div style="position:absolute;left:562px;top:523px;width:14px;height:18px;box-sizing:border-box;background:#fff;border-style:solid;border-width:1px 1px 0 1px;border-color:#ACA899 #F1EFE2 #F1EFE2 #ACA899;box-shadow:inset 1px 1px 0 #716F64"></div>
<div class="t" style="left:566.00px;top:526.93px;transform-origin:0 0;font-size:10px;font-weight:normal;color:#000;transform:scaleX(0.8800);">N</div>
<div class="t" style="left:592.20px;top:457.54px;transform-origin:0 0;font-size:10px;font-weight:normal;color:#000;transform:scaleX(0.9570);">Tesouraria</div>
<div style="position:absolute;left:678px;top:452px;width:14px;height:18px;box-sizing:border-box;background:#fff;border-style:solid;border-width:1px 1px 0 1px;border-color:#ACA899 #F1EFE2 #F1EFE2 #ACA899;box-shadow:inset 1px 1px 0 #716F64"></div>
<div class="t" style="left:682.00px;top:455.94px;transform-origin:0 0;font-size:10px;font-weight:normal;color:#000;transform:scaleX(0.8800);">N</div>
<div class="t" style="left:592.20px;top:475.04px;transform-origin:0 0;font-size:10px;font-weight:normal;color:#000;transform:scaleX(0.9277);">Rateio na Seção</div>
<div style="position:absolute;left:678px;top:470px;width:14px;height:18px;box-sizing:border-box;background:#fff;border-style:solid;border-width:1px 1px 0 1px;border-color:#ACA899 #F1EFE2 #F1EFE2 #ACA899;box-shadow:inset 1px 1px 0 #716F64"></div>
<div class="t" style="left:682.00px;top:473.94px;transform-origin:0 0;font-size:10px;font-weight:normal;color:#000;transform:scaleX(0.8800);">N</div>
<div class="t" style="left:592.20px;top:492.54px;transform-origin:0 0;font-size:10px;font-weight:normal;color:#000;transform:scaleX(0.8849);">I.N.S.S.</div>
<div style="position:absolute;left:678px;top:487px;width:14px;height:18px;box-sizing:border-box;background:#fff;border-style:solid;border-width:1px 1px 0 1px;border-color:#ACA899 #F1EFE2 #F1EFE2 #ACA899;box-shadow:inset 1px 1px 0 #716F64"></div>
<div class="t" style="left:682.00px;top:490.94px;transform-origin:0 0;font-size:10px;font-weight:normal;color:#000;transform:scaleX(0.8800);">N</div>
<div class="t" style="left:592.20px;top:510.04px;transform-origin:0 0;font-size:10px;font-weight:normal;color:#000;transform:scaleX(0.8903);">Dígito Extra</div>
<div style="position:absolute;left:678px;top:505px;width:14px;height:18px;box-sizing:border-box;background:#fff;border-style:solid;border-width:1px 1px 0 1px;border-color:#ACA899 #F1EFE2 #F1EFE2 #ACA899;box-shadow:inset 1px 1px 0 #716F64"></div>
<div class="t" style="left:592.20px;top:527.53px;transform-origin:0 0;font-size:10px;font-weight:normal;color:#000;transform:scaleX(0.8403);">PIS/COFINS</div>
<div style="position:absolute;left:678px;top:523px;width:14px;height:18px;box-sizing:border-box;background:#fff;border-style:solid;border-width:1px 1px 0 1px;border-color:#ACA899 #F1EFE2 #F1EFE2 #ACA899;box-shadow:inset 1px 1px 0 #716F64"></div>
<div class="t" style="left:682.00px;top:526.93px;transform-origin:0 0;font-size:10px;font-weight:normal;color:#000;transform:scaleX(0.8800);">S</div>
<div class="t" style="left:706.25px;top:457.54px;transform-origin:0 0;font-size:10px;font-weight:normal;color:#000;transform:scaleX(0.9084);">Controla ISS</div>
<div style="position:absolute;left:774px;top:452px;width:14px;height:18px;box-sizing:border-box;background:#fff;border-style:solid;border-width:1px 1px 0 1px;border-color:#ACA899 #F1EFE2 #F1EFE2 #ACA899;box-shadow:inset 1px 1px 0 #716F64"></div>
<div class="t" style="left:778.00px;top:455.94px;transform-origin:0 0;font-size:10px;font-weight:normal;color:#000;transform:scaleX(0.8800);">N</div>
<div class="t" style="left:706.25px;top:475.04px;transform-origin:0 0;font-size:10px;font-weight:normal;color:#000;transform:scaleX(0.9057);">Controla CSLL</div>
<div style="position:absolute;left:774px;top:470px;width:14px;height:18px;box-sizing:border-box;background:#fff;border-style:solid;border-width:1px 1px 0 1px;border-color:#ACA899 #F1EFE2 #F1EFE2 #ACA899;box-shadow:inset 1px 1px 0 #716F64"></div>
<div class="t" style="left:778.00px;top:473.94px;transform-origin:0 0;font-size:10px;font-weight:normal;color:#000;transform:scaleX(0.8800);">N</div>
<div class="t" style="left:706.25px;top:492.54px;transform-origin:0 0;font-size:10px;font-weight:normal;color:#000;transform:scaleX(0.9443);">Classe Finan.</div>
<div style="position:absolute;left:774px;top:487px;width:14px;height:18px;box-sizing:border-box;background:#fff;border-style:solid;border-width:1px 1px 0 1px;border-color:#ACA899 #F1EFE2 #F1EFE2 #ACA899;box-shadow:inset 1px 1px 0 #716F64"></div>
<div class="t" style="left:778.00px;top:490.94px;transform-origin:0 0;font-size:10px;font-weight:normal;color:#000;transform:scaleX(0.8800);">C</div>
<div class="t" style="left:706.25px;top:510.04px;transform-origin:0 0;font-size:10px;font-weight:normal;color:#000;transform:scaleX(0.9616);">Ativa</div>
<div style="position:absolute;left:774px;top:505px;width:14px;height:18px;box-sizing:border-box;background:#fff;border-style:solid;border-width:1px 1px 0 1px;border-color:#ACA899 #F1EFE2 #F1EFE2 #ACA899;box-shadow:inset 1px 1px 0 #716F64"></div>
<div class="t" style="left:778.00px;top:508.94px;transform-origin:0 0;font-size:10px;font-weight:normal;color:#000;transform:scaleX(0.8800);">S</div>
<div class="t" style="left:706.25px;top:527.53px;transform-origin:0 0;font-size:10px;font-weight:normal;color:#000;transform:scaleX(0.9070);">Incl. Manual</div>
<div style="position:absolute;left:774px;top:523px;width:14px;height:18px;box-sizing:border-box;background:#fff;border-style:solid;border-width:1px 1px 0 1px;border-color:#ACA899 #F1EFE2 #F1EFE2 #ACA899;box-shadow:inset 1px 1px 0 #716F64"></div>
<div class="t" style="left:778.00px;top:526.93px;transform-origin:0 0;font-size:10px;font-weight:normal;color:#000;transform:scaleX(0.8800);">S</div>
<div style="position:absolute;left:0;top:644px;width:900px;height:4px;background:#3580E4"></div>
<div style="position:absolute;left:0;top:643px;width:900px;height:1px;background:#F6F5EE"></div>
<div style="position:absolute;left:0px;top:624px;width:414px;height:19px;border-style:solid;border-width:1px 1px 0 1px;border-color:#ACA899 #FFFFFF #FFFFFF #ACA899"></div>
<div style="position:absolute;left:417px;top:624px;width:74px;height:19px;border-style:solid;border-width:1px 1px 0 1px;border-color:#ACA899 #FFFFFF #FFFFFF #ACA899"></div>
<div class="t" style="left:406.50px;width:95px;text-align:center;top:629.43px;transform-origin:50% 0;font-size:10px;font-weight:normal;color:#000;transform:scaleX(0.9115);">VERSAO567</div>
<div style="position:absolute;left:494px;top:624px;width:35px;height:19px;border-style:solid;border-width:1px 1px 0 1px;border-color:#ACA899 #FFFFFF #FFFFFF #ACA899"></div>
<div class="t" style="left:483.80px;width:56px;text-align:center;top:629.43px;transform-origin:50% 0;font-size:10px;font-weight:normal;color:#000;transform:scaleX(0.9300);">1-9</div>
<div style="position:absolute;left:533px;top:624px;width:73px;height:19px;border-style:solid;border-width:1px 1px 0 1px;border-color:#ACA899 #FFFFFF #FFFFFF #ACA899"></div>
<div class="t" style="left:523.10px;width:94px;text-align:center;top:629.43px;transform-origin:50% 0;font-size:10px;font-weight:normal;color:#000;transform:scaleX(0.8800);">VCTUTCON</div>
<div style="position:absolute;left:610px;top:624px;width:43px;height:19px;border-style:solid;border-width:1px 1px 0 1px;border-color:#ACA899 #FFFFFF #FFFFFF #ACA899"></div>
<div class="t" style="left:599.80px;width:64px;text-align:center;top:629.43px;transform-origin:50% 0;font-size:10px;font-weight:normal;color:#000;transform:scaleX(0.9300);">5.67.9</div>
<div style="position:absolute;left:657px;top:624px;width:68px;height:19px;border-style:solid;border-width:1px 1px 0 1px;border-color:#ACA899 #FFFFFF #FFFFFF #ACA899"></div>
<div class="t" style="left:646.80px;width:89px;text-align:center;top:629.43px;transform-origin:50% 0;font-size:10px;font-weight:normal;color:#000;transform:scaleX(0.9300);">Alteração</div>
<div style="position:absolute;left:729px;top:624px;width:10px;height:19px;border-style:solid;border-width:1px 1px 0 1px;border-color:#ACA899 #FFFFFF #FFFFFF #ACA899"></div>
<div class="t" style="left:718.81px;width:31px;text-align:center;top:629.43px;transform-origin:50% 0;font-size:10px;font-weight:normal;color:#000;transform:scaleX(0.8800);">L</div>
<div style="position:absolute;left:743px;top:624px;width:30px;height:19px;border-style:solid;border-width:1px 1px 0 1px;border-color:#ACA899 #FFFFFF #FFFFFF #ACA899"></div>
<div class="t" style="left:732.85px;width:51px;text-align:center;top:629.43px;transform-origin:50% 0;font-size:10px;font-weight:normal;color:#000;transform:scaleX(0.8800);">CAPS</div>
<div style="position:absolute;left:776px;top:624px;width:29px;height:19px;border-style:solid;border-width:1px 1px 0 1px;border-color:#ACA899 #FFFFFF #FFFFFF #ACA899"></div>
<div class="t" style="left:766.15px;width:50px;text-align:center;top:629.43px;transform-origin:50% 0;font-size:10px;font-weight:normal;color:#000;transform:scaleX(0.8800);">NUM</div>
<div style="position:absolute;left:808px;top:624px;width:74px;height:19px;border-style:solid;border-width:1px 1px 0 1px;border-color:#ACA899 #FFFFFF #FFFFFF #ACA899"></div>
<div class="t" style="left:797.80px;width:95px;text-align:center;top:629.43px;transform-origin:50% 0;font-size:10px;font-weight:normal;color:#000;transform:scaleX(0.9300);">28/1/2009</div>
</div></body></html>
